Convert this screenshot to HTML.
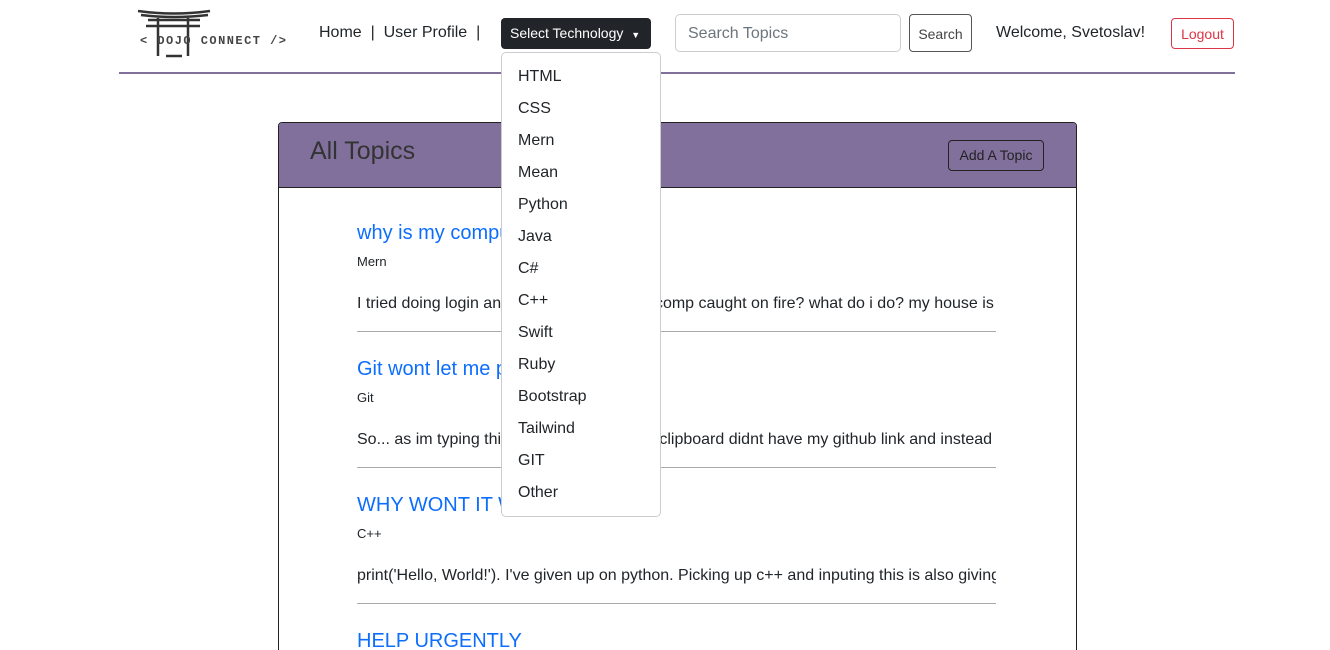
<!DOCTYPE html>
<html><head><meta charset="utf-8"><style>
*{box-sizing:border-box;margin:0;padding:0}
html,body{width:1330px;height:650px;overflow:hidden}
body{background:#fff;font-family:"Liberation Sans",sans-serif;color:#212529;position:relative}
.a{position:absolute}
.nav{font-size:16px;white-space:nowrap}
.line{left:119px;top:72px;width:1116px;height:2px;background:#82709c}
.card{left:278px;top:122px;width:799px;height:540px;border:1px solid #222;border-radius:4px;overflow:hidden}
.hd{height:65px;background:#82709c;border-bottom:1px solid #222;position:relative}
.hd h2{position:absolute;left:31px;top:14px;font-weight:400;font-size:25px;color:#333}
.btn{position:absolute;right:32px;top:17px;width:96px;height:31px;line-height:29px;text-align:center;border:1px solid #222;border-radius:4px;font-size:14px;color:#222}
.item{position:absolute;left:78px;width:639px;overflow:hidden;white-space:nowrap}
.t{color:#0d6efd;font-size:20px;height:28px}
.g{font-size:13px;margin-top:4px}
.b{font-size:16px;margin-top:26px}
.hr{border-top:1px solid #aaa;margin-top:18px}
.dd{left:501px;top:52px;width:160px;height:465px;border:1px solid #ccc;border-radius:5px;background:#fff}
.dd div{height:32px;line-height:32px;padding-left:16px;font-size:16px}
</style></head><body>
<svg class="a" style="left:136px;top:8px" width="152" height="52" viewBox="0 0 152 52">
<path d="M2 3 Q38 8 74 3 M5 7 Q38 11 72 7 M12 12 H64 M22 10 V48 M52 10 V48 M10 18 H64 M30 48 H46" stroke="#333" stroke-width="2.5" fill="none"/>
<text x="4" y="36" font-size="12" font-family="Liberation Mono" font-weight="bold" fill="#444" textLength="146">&lt; DOJO CONNECT /&gt;</text>
</svg>
<div class="a nav" style="left:319px;top:24px">Home&nbsp;&nbsp;|&nbsp;&nbsp;User Profile&nbsp;&nbsp;|</div>
<div class="a" style="left:501px;top:18px;width:150px;height:31px;background:#212529;border-radius:4px;color:#fff;font-size:14px;line-height:31px;padding-left:9px">Select Technology <span style="font-size:9px;margin-left:4px">▼</span></div>
<div class="a" style="left:675px;top:14px;width:226px;height:38px;border:1px solid #ccc;border-radius:5px;color:#6c757d;font-size:16px;line-height:38px;padding-left:12px">Search Topics</div>
<div class="a" style="left:909px;top:14px;width:63px;height:38px;border:1px solid #555;border-radius:4px;font-size:14px;line-height:38px;text-align:center;color:#444">Search</div>
<div class="a nav" style="left:996px;top:24px">Welcome, Svetoslav!</div>
<div class="a" style="left:1171px;top:18px;width:63px;height:31px;border:1px solid #dc3545;border-radius:4px;color:#dc3545;font-size:14px;line-height:31px;text-align:center">Logout</div>
<div class="a line"></div>
<div class="a card"><div class="hd"><h2>All Topics</h2><div class="btn">Add A Topic</div></div>
<div class="item" style="top:99px"><div class="t">why is my computer on fire?</div><div class="g">Mern</div><div class="b">I tried doing login and registration and my comp caught on fire? what do i do? my house is burning</div><div class="hr"></div></div>
<div class="item" style="top:235px"><div class="t">Git wont let me push</div><div class="g">Git</div><div class="b">So... as im typing this i realized my copied clipboard didnt have my github link and instead was something else</div><div class="hr"></div></div>
<div class="item" style="top:371px"><div class="t">WHY WONT IT WORK</div><div class="g">C++</div><div class="b">print('Hello, World!'). I've given up on python. Picking up c++ and inputing this is also giving me errors</div><div class="hr"></div></div>
<div class="item" style="top:507px"><div class="t">HELP URGENTLY</div></div>
</div>
<div class="a dd" style="padding-top:8px">
<div>HTML</div><div>CSS</div><div>Mern</div><div>Mean</div><div>Python</div><div>Java</div><div>C#</div><div>C++</div><div>Swift</div><div>Ruby</div><div>Bootstrap</div><div>Tailwind</div><div>GIT</div><div>Other</div>
</div>
</body></html>
